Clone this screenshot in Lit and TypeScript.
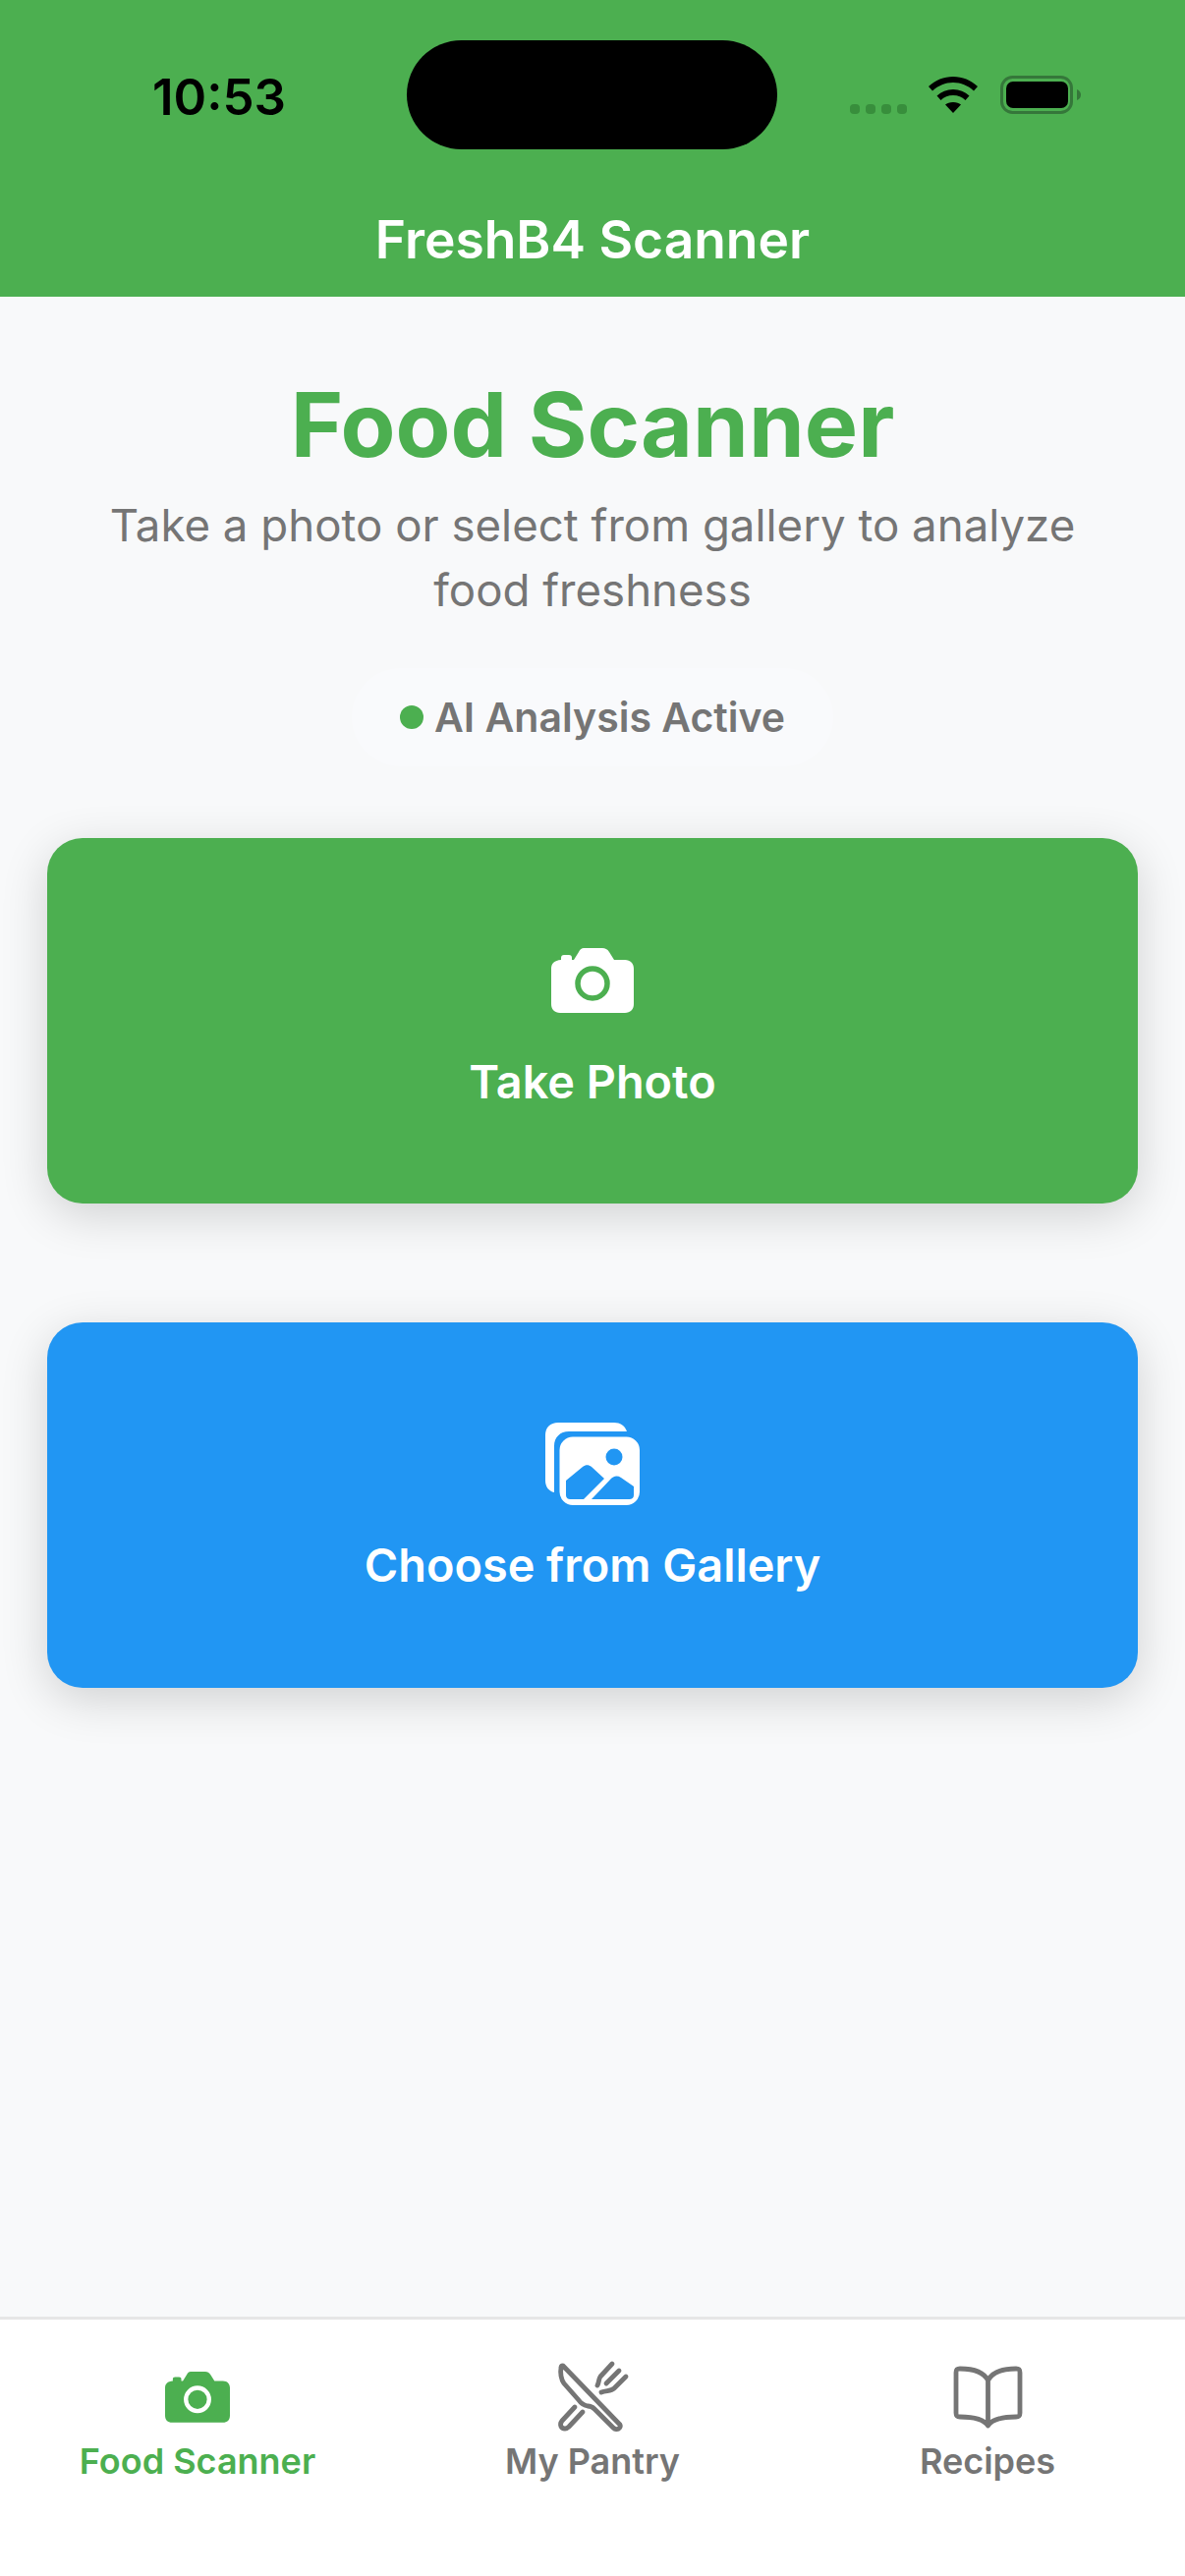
import { LitElement, html, css } from "lit";
import { customElement } from "lit/decorators.js";

const cameraIcon = (size: number, hole: string) => html`<svg width=${size} height=${(size * 66) / 84} viewBox="0 0 84 66">
  <path fill="currentColor" d="M33 0H52C55 0 57 1 59 4L64 12H75C80.500 12 84 15.500 84 21V57C84 62.500 80.500 66 75 66H9C3.500 66 0 62.500 0 57V21C0 16 3 12.500 10 12V10C10 8 11 7 13 7H18C20 7 21 8 21 10V12H23L28 4C29.500 1 31 0 33 0Z"/>
  <circle cx="42" cy="36" r="15" fill="none" stroke=${hole} stroke-width="5.500"/>
</svg>`;

@customElement("app-root")
export class AppRoot extends LitElement {
  static styles = css`
    :host {
      display: flex;
      flex-direction: column;
      height: 2622px;
      font-family: Inter, "Noto Sans", sans-serif;
      background: #f8f9fa;
      color: #757575;
      overflow: hidden;
    }
    .header {
      height: 302px;
      flex: none;
      box-sizing: border-box;
      background: #4caf50;
      display: flex;
      flex-direction: column;
      padding-top: 41px;
    }
    .status {
      display: flex;
      align-items: center;
      height: 111px;
      padding-left: 155px;
    }
    .time {
      width: 259px;
      font-size: 51px;
      font-weight: 600;
      color: #000;
      line-height: 1;
      padding-top: 3px;
    }
    .island {
      width: 377px;
      height: 111px;
      border-radius: 56px;
      background: #000;
      flex: none;
    }
    .right {
      display: flex;
      align-items: center;
      margin-left: 74px;
    }
    .dots {
      display: flex;
      gap: 6px;
      margin-top: 29px;
      margin-right: 22px;
    }
    .dots i {
      width: 10px;
      height: 10px;
      border-radius: 4px;
      background: #388e3c;
      display: block;
    }
    .battery {
      margin-left: 23px;
      display: block;
    }
    .htitle {
      margin-top: 60px;
      text-align: center;
      font-size: 53.3px;
      line-height: 64px;
      font-weight: 600;
      color: #fff;
    }
    .main {
      flex: 1;
      display: flex;
      flex-direction: column;
      align-items: center;
      padding: 78px 48px 0;
    }
    h1 {
      margin: 0;
      font-size: 91.3px;
      line-height: 104px;
      font-weight: 700;
      color: #4caf50;
    }
    .sub {
      margin: 18px 0 0;
      width: 1040px;
      text-align: center;
      font-size: 45.6px;
      line-height: 66px;
      font-weight: 400;
    }
    .badge {
      margin-top: 46px;
      height: 100px;
      width: 490px;
      box-sizing: border-box;
      padding: 0 0 0 49px;
      display: flex;
      align-items: center;
      gap: 11px;
      border-radius: 50px;
      background: #f9fafc;
      font-size: 41px;
      font-weight: 600;
    }
    .dot {
      width: 24px;
      height: 24px;
      border-radius: 50%;
      background: #4caf50;
    }
    .btn {
      width: 1110px;
      height: 372px;
      flex: none;
      box-sizing: border-box;
      border-radius: 36px;
      color: #fff;
      display: flex;
      flex-direction: column;
      align-items: center;
      font-size: 46.8px;
      font-weight: 600;
      box-shadow: 0 12px 48px rgba(0, 0, 0, 0.16);
    }
    .btn.green {
      background: #4caf50;
      margin-top: 73px;
      padding-top: 112px;
    }
    .btn.blue {
      background: #2196f3;
      margin-top: 121px;
      padding-top: 102px;
    }
    .btn svg { display: block; }
    .btn .lbl { line-height: 58px; }
    .green .lbl { margin-top: 41px; }
    .blue .lbl { margin-top: 32px; }
    .tabs {
      height: 264px;
      flex: none;
      box-sizing: border-box;
      border-top: 3px solid #e6e6e6;
      background: #fff;
      display: grid;
      grid-template-columns: repeat(3, 1fr);
    }
    .tab {
      display: flex;
      flex-direction: column;
      align-items: center;
      font-size: 36px;
      font-weight: 600;
      color: #757575;
    }
    .tab.on { color: #4caf50; }
    .tab .ico {
      height: 90px;
      margin-top: 29px;
      display: flex;
      align-items: center;
      justify-content: center;
      width: 120px;
    }
    .tab .cam { padding-top: 10px; height: 80px; }
    .tab span { line-height: 44px; margin-top: 3px; }
  `;

  render() {
    return html`
      <div class="header">
        <div class="status">
          <div class="time">10:53</div>
          <div class="island"></div>
          <div class="right">
            <div class="dots"><i></i><i></i><i></i><i></i></div>
            <svg width="50" height="37" viewBox="0 0 50 37">
              <path fill="#000" d="M25 0C15.500 0 7 3.500 0 10L4 14.500C10 9 17 6 25 6C33 6 40 9 46 14.500L50 10C43 3.500 34.500 0 25 0Z"/>
              <path fill="#000" d="M25 13C18.500 13 13 15.200 8.500 19.500L12.500 24C16 20.700 20 19 25 19C30 19 34 20.700 37.500 24L41.500 19.500C37 15.200 31.500 13 25 13Z"/>
              <path fill="#000" d="M25 26C21.500 26 19 27 17 28.500L25 37L33 28.500C31 27 28.500 26 25 26Z"/>
            </svg>
            <svg class="battery" width="82" height="40" viewBox="0 0 82 40">
              <rect x="1.500" y="1.500" width="71" height="36" rx="11" fill="none" stroke="#35773a" stroke-width="3"/>
              <rect x="6" y="6" width="63" height="27" rx="7" fill="#000"/>
              <path fill="#35773a" d="M78 14C81 15 82 17.500 82 19.500C82 21.500 81 24 78 25Z"/>
            </svg>
          </div>
        </div>
        <div class="htitle">FreshB4 Scanner</div>
      </div>
      <div class="main">
        <h1>Food Scanner</h1>
        <p class="sub">Take a photo or select from gallery to analyze food freshness</p>
        <div class="badge"><div class="dot"></div>AI Analysis Active</div>
        <div class="btn green">
          ${cameraIcon(84, "#4caf50")}
          <div class="lbl">Take Photo</div>
        </div>
        <div class="btn blue">
          <svg width="96" height="84" viewBox="0 0 96 84">
            <path fill="#fff" d="M13 0H70C76 0 81 3 83 9H24C15 9 9 15 9 24V71C3.500 70 0 65 0 59V13C0 5 5 0 13 0Z"/>
            <rect x="17" y="17" width="76.500" height="64.500" rx="11" fill="#fff" stroke="#fff" stroke-width="5"/>
            <circle cx="70" cy="35" r="8.500" fill="#2196f3"/>
            <path fill="#2196f3" d="M21 59L38 45C41 42.500 44 42.500 47 45L60 57L39 78H25C22.500 78 21 76 21 74Z"/>
            <path fill="#2196f3" d="M47 78L66 58C69 54.500 73 53.500 77 56L90 65V74C90 76.500 88 78 86 78Z"/>
          </svg>
          <div class="lbl">Choose from Gallery</div>
        </div>
      </div>
      <div class="tabs">
        <div class="tab on">
          <div class="ico cam">${cameraIcon(66, "#fff")}</div>
          <span>Food Scanner</span>
        </div>
        <div class="tab">
          <div class="ico">
            <svg width="120" height="90" viewBox="0 0 120 90" fill="none" stroke="currentColor" stroke-width="4.800" stroke-linecap="round" stroke-linejoin="round">
              <g transform="translate(-3 0)">
                <path d="M33 18L91 78C92 80 90 83 87 82.500C86 82.500 85 82 84 81L65 62C63 60 61 59 58 59C54 58 51 56 49 53L34 36C31 32 30 25 31 20C31 18 32 17.500 33 18Z"/>
                <path d="M45 60L32 74C29 78 31 82 35 82C37 82 38 81 39 80L53 65"/>
                <path d="M83 16L71 29C69 32 70 34 68 38"/>
                <path d="M90 23L77 36"/>
                <path d="M97 29L85 41C82 44 77 43 72 45"/>
              </g>
            </svg>
          </div>
          <span>My Pantry</span>
        </div>
        <div class="tab">
          <div class="ico">
            <svg width="120" height="90" viewBox="0 0 120 90" fill="none" stroke="currentColor" stroke-width="4.800" stroke-linecap="round" stroke-linejoin="round">
              <path d="M60.500 33C56 24 44 21 32 21C29 21 28 22 28 25V66C28 69 29 70 32 70C44 70 56 72 60.500 79C65 72 77 70 89 70C92 70 93 69 93 66V25C93 22 92 21 89 21C77 21 65 24 60.500 33V79"/>
            </svg>
          </div>
          <span>Recipes</span>
        </div>
      </div>
    `;
  }
}
